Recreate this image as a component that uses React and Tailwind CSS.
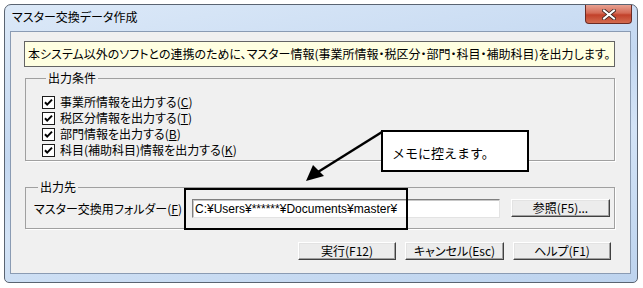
import React from "react";

const font = "font-['Noto_Sans_CJK_JP','Noto_Sans_CJK_SC',sans-serif] [font-feature-settings:'palt']";

function Check() {
  return (
    <svg width="13" height="13" viewBox="0 0 13 13" className="shrink-0">
      <rect x="0.5" y="0.5" width="12" height="12" fill="#fff" stroke="#1c1c1c" />
      <path d="M3 6.2 L5.2 8.6 L10 3.6" fill="none" stroke="#000" strokeWidth="2" />
    </svg>
  );
}

function Btn({ children, w }) {
  return (
    <div
      className={`${w} h-[18px] flex items-center justify-center bg-[#ececec] border-t border-l border-t-white border-l-white border-r border-b border-r-[#404040] border-b-[#404040] shadow-[inset_-1px_-1px_0_#a0a0a0,inset_1px_1px_0_#e3e3e3] text-[12px] leading-none text-black`}
    >
      {children}
    </div>
  );
}

function Row({ children }) {
  return (
    <div className="h-[16px] flex items-center gap-[5px] text-[12px] text-black">
      <Check />
      <span className="leading-none">{children}</span>
    </div>
  );
}

export default function App() {
  return (
    <div className={`relative w-[643px] h-[288px] bg-white overflow-hidden ${font}`}>
      <div className="ml-[4px] mt-[4px] w-[634px] h-[279px] rounded-t-[7px] rounded-b-[5px] border border-[#5a6472] bg-[linear-gradient(170deg,#dce9f8_0%,#c4d8f1_40%,#d3e3f6_60%,#bdd3ee_100%)] flex flex-col">
        <div className="h-[26px] flex items-start justify-between pl-[7px] pr-[5px]">
          <div className="mt-[5px] text-[12px] leading-[14px] text-black">マスター交換データ作成</div>
          <div className="w-[47px] h-[19px] rounded-b-[4px] border border-t-0 border-[#6b2b24] bg-[linear-gradient(180deg,#e8a191_0%,#d46a55_45%,#c2412a_55%,#d36b4f_100%)] flex items-center justify-center">
            <svg width="14" height="11" viewBox="0 0 14 11">
              <path d="M2 1.5 L12 9.5 M12 1.5 L2 9.5" stroke="#3b2420" strokeWidth="3.6" strokeLinecap="square" />
              <path d="M2 1.5 L12 9.5 M12 1.5 L2 9.5" stroke="#fff" strokeWidth="2" strokeLinecap="square" />
            </svg>
          </div>
        </div>
        <div className="ml-[5px] w-[621px] h-[243px] border border-[#8a9bb3] bg-[#f0f0f0] flex flex-col pl-[13px] pr-[14px]">
          <div className="mt-[9px] h-[26px] w-[591px] border border-[#646464] bg-[#ffffe1] flex items-center pl-[3px] text-[12px] leading-none text-black whitespace-nowrap">
            本システム以外のソフトとの連携のために、マスター情報(事業所情報・税区分・部門・科目・補助科目)を出力します。
          </div>
          <fieldset className="mt-[4px] ml-[1px] w-[590px] h-[90px] border border-[#a0a0a0] shadow-[1px_1px_0_#fff] pl-[16px]">
            <legend className="ml-[4px] px-[2px] text-[12px] leading-[14px] text-black">出力条件</legend>
            <div className="pt-[9px] flex flex-col">
              <Row>事業所情報を出力する(<u>C</u>)</Row>
              <Row>税区分情報を出力する(<u>T</u>)</Row>
              <Row>部門情報を出力する(<u>B</u>)</Row>
              <Row>科目(補助科目)情報を出力する(<u>K</u>)</Row>
            </div>
          </fieldset>
          <fieldset className="mt-[19px] ml-[1px] w-[590px] h-[49px] border border-[#a0a0a0] shadow-[1px_1px_0_#fff] pl-[8px]">
            <legend className="ml-[4px] px-[2px] text-[12px] leading-[14px] text-black">出力先</legend>
            <div className="pt-[5px] flex items-start">
              <div className="w-[158px] h-[19px] flex items-center text-[12px] leading-none text-black whitespace-nowrap">
                マスター交換用フォルダー(<u>F</u>)
              </div>
              <div className="w-[308px] h-[19px] border border-t-[#808080] border-l-[#808080] border-r-[#e3e3e3] border-b-[#e3e3e3] shadow-[inset_1px_1px_0_#c8c8c8] bg-white flex items-center pl-[2px] text-[12px] leading-none text-black font-['Liberation_Sans','Noto_Sans_CJK_JP',sans-serif] whitespace-nowrap">
                C:¥Users¥******¥Documents¥master¥
              </div>
              <div className="ml-[11px]">
                <Btn w="w-[99px]">参照(F5)...</Btn>
              </div>
            </div>
          </fieldset>
          <div className="mt-[13px] flex justify-end gap-[9px] pr-[5px]">
            <Btn w="w-[98px]">実行(F12)</Btn>
            <Btn w="w-[99px]">キャンセル(Esc)</Btn>
            <Btn w="w-[98px]">ヘルプ(F1)</Btn>
          </div>
        </div>
      </div>

      {/* annotation overlays */}
      <div className="absolute left-[184px] top-[188px] w-[224px] h-[42px] border-[2.5px] border-black" />
      <svg className="absolute left-0 top-0" width="643" height="288">
        <line x1="382" y1="132" x2="318" y2="172" stroke="#000" strokeWidth="2.5" />
        <polygon points="306,181 313,165 324,176" fill="#000" />
      </svg>
      <div className="absolute left-[381px] top-[130px] w-[148px] h-[42px] border-2 border-black bg-white flex items-center pl-[9px] pt-[3px] text-[13px] leading-none text-black [font-feature-settings:normal]">
        メモに控えます。
      </div>
    </div>
  );
}
